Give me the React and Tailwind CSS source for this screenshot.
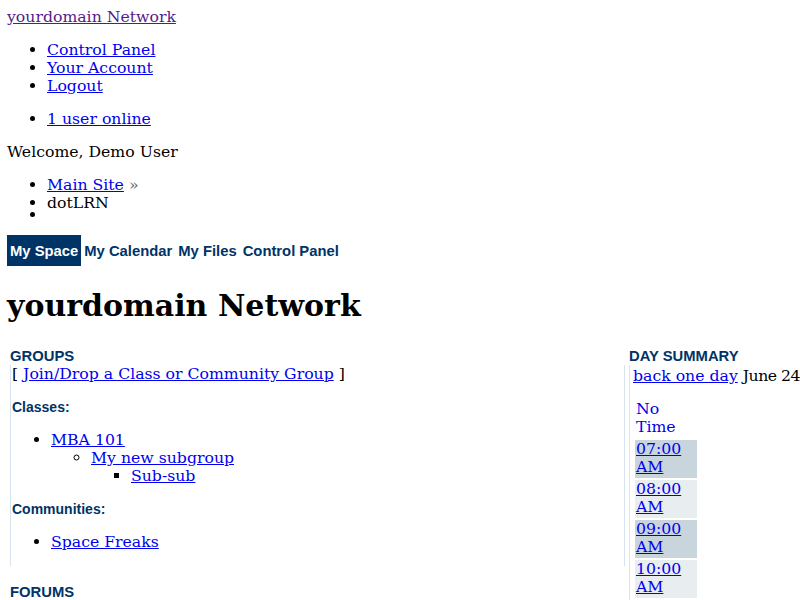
import React from "react";

const serif = "font-['DejaVu_Serif',serif]";
const sans = "font-['Liberation_Sans',Arial,sans-serif]";

function Link({ children, visited }) {
  return (
    <a href="#" className={`${visited ? "text-[#551a8b]" : "text-[#0000ee]"} underline`}>
      {children}
    </a>
  );
}

function TimeCell({ time, dark }) {
  return (
    <div className={`w-[62px] h-[38px] pl-[1px] ${dark ? "bg-[#c9d5dc]" : "bg-[#e8edf0]"}`}>
      <Link>{time}</Link>
      <br />
      <Link>AM</Link>
    </div>
  );
}

export default function App() {
  return (
    <div className={`w-[800px] h-[600px] overflow-hidden bg-white text-black text-[15.7px] leading-[18px] ${serif}`}>
      <div className="px-[7px] pt-[8px]">
        <div>
          <Link visited>yourdomain Network</Link>
        </div>

        <ul className="list-disc pl-10 mt-[15px]">
          <li><Link>Control Panel</Link></li>
          <li><Link>Your Account</Link></li>
          <li><Link>Logout</Link></li>
        </ul>

        <ul className="list-disc pl-10 mt-[15px]">
          <li><Link>1 user online</Link></li>
        </ul>

        <p className="mt-[15px]">Welcome, Demo User</p>

        <ul className="list-disc pl-10 mt-[15px]">
          <li>
            <Link>Main Site</Link> <span className="text-[#666666]">»</span>
          </li>
          <li>dotLRN</li>
          <li className="-mt-[6px] h-[18px]"></li>
        </ul>

        <div className={`flex items-center mt-[11px] h-[31px] text-[14.8px] font-bold text-[#003366] ${sans}`}>
          <div className="h-full flex items-center px-[3px] bg-[#003366] text-white">My Space</div>
          <div className="px-[3px]">My Calendar</div>
          <div className="px-[3px]">My Files</div>
          <div className="px-[3px]">Control Panel</div>
        </div>

        <h1 className={`mt-[22px] text-[30px] leading-[36px] font-bold ${serif}`}>yourdomain Network</h1>

        <div className="flex mt-[23px]">
          <div className="w-[617px] shrink-0 pl-[3px]">
            <h2 className={`text-[14.8px] leading-[18px] font-bold text-[#003366] ${sans}`}>GROUPS</h2>
            <div className="border-l border-[#d7e3ee] pb-[15px]">
              <div className="pl-[1px]">
                [ <Link>Join/Drop a Class or Community Group</Link> ]
              </div>
              <h3 className={`mt-[15px] pl-[1px] text-[14px] leading-[18px] font-bold text-[#003366] ${sans}`}>Classes:</h3>
              <ul className="list-disc pl-10 mt-[15px]">
                <li>
                  <Link>MBA 101</Link>
                  <ul className="list-[circle] pl-10">
                    <li>
                      <Link>My new subgroup</Link>
                      <ul className="list-[square] pl-10">
                        <li><Link>Sub-sub</Link></li>
                      </ul>
                    </li>
                  </ul>
                </li>
              </ul>
              <h3 className={`mt-[15px] pl-[1px] text-[14px] leading-[18px] font-bold text-[#003366] ${sans}`}>Communities:</h3>
              <ul className="list-disc pl-10 mt-[15px]">
                <li><Link>Space Freaks</Link></li>
              </ul>
            </div>
            <h2 className={`mt-[17px] text-[14.8px] leading-[18px] font-bold text-[#003366] ${sans}`}>FORUMS</h2>
          </div>

          <div className="flex shrink-0">
            <div className="w-px h-[201px] mt-[18px] bg-[#d7e3ee]" />
            <div className="ml-[4px]">
              <h2 className={`text-[14.8px] leading-[18px] font-bold text-[#003366] ${sans}`}>DAY SUMMARY</h2>
              <div className="border-l border-[#d7e3ee] pl-[3px] pt-[2px] h-[300px]">
                <div className="whitespace-nowrap">
                  <Link>back one day</Link> <span className="tracking-[-0.5px]">June 24</span>
                </div>
                <div className="mt-[15px] pl-[2px] flex flex-col gap-[2px]">
                  <div className="text-[#0000ee] pl-[1px] mb-[2px]">
                    No
                    <br />
                    Time
                  </div>
                  <TimeCell time="07:00" dark />
                  <TimeCell time="08:00" />
                  <TimeCell time="09:00" dark />
                  <TimeCell time="10:00" />
                </div>
              </div>
            </div>
          </div>
        </div>
      </div>
    </div>
  );
}
